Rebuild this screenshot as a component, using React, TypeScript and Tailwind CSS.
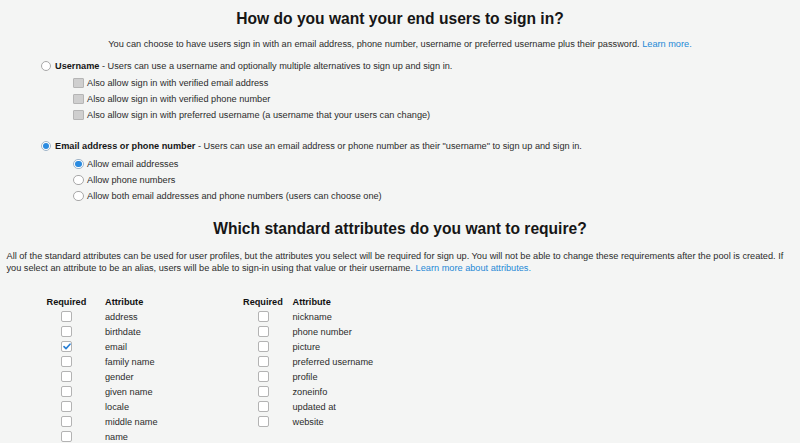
import React from "react";

const font = "font-['Liberation_Sans','Helvetica',Arial,sans-serif]";

function Radio({ checked }: { checked?: boolean }) {
  return (
    <span
      className={`flex h-[10.5px] w-[10.5px] shrink-0 items-center justify-center rounded-full border bg-white ${
        checked ? "border-[#9fb4c8]" : "border-[#a8a8a8]"
      }`}
    >
      {checked && <span className="h-[6.5px] w-[6.5px] rounded-full bg-[#2a8be0]" />}
    </span>
  );
}

function GrayBox() {
  return <span className="h-[10.5px] w-[10.5px] shrink-0 rounded-[1px] border border-[#b5b5b5] bg-[#cfcfcf]" />;
}

function CheckBox({ checked }: { checked?: boolean }) {
  return (
    <span className="flex h-[11px] w-[11px] shrink-0 items-center justify-center rounded-[2px] border border-[#b3b3b3] bg-white">
      {checked && (
        <svg width="8" height="7" viewBox="0 0 8 7" fill="none">
          <path d="M1 3.6 L3 5.6 L7 1.2" stroke="#2a7fd4" strokeWidth="1.6" strokeLinecap="round" strokeLinejoin="round" />
        </svg>
      )}
    </span>
  );
}

function AttrTable({
  cols,
  rows,
}: {
  cols: string;
  rows: { name: string; checked?: boolean }[];
}) {
  return (
    <div className={`grid ${cols} grid-rows-[13px] auto-rows-[15px] items-center`}>
      <div className="font-bold leading-[13px] text-[#111]">Required</div>
      <div className="font-bold leading-[13px] text-[#111]">Attribute</div>
      {rows.map((r) => (
        <React.Fragment key={r.name}>
          <div className="flex w-[40px] justify-center">
            <CheckBox checked={r.checked} />
          </div>
          <div>{r.name}</div>
        </React.Fragment>
      ))}
    </div>
  );
}

export default function App() {
  const left = [
    { name: "address" },
    { name: "birthdate" },
    { name: "email", checked: true },
    { name: "family name" },
    { name: "gender" },
    { name: "given name" },
    { name: "locale" },
    { name: "middle name" },
    { name: "name" },
  ];
  const right = [
    { name: "nickname" },
    { name: "phone number" },
    { name: "picture" },
    { name: "preferred username" },
    { name: "profile" },
    { name: "zoneinfo" },
    { name: "updated at" },
    { name: "website" },
  ];

  return (
    <div className={`h-[443px] w-[800px] overflow-hidden bg-[#f4f5f4] ${font} text-[9.2px] leading-[12px] text-[#2b2b2b]`}>
      <h1 className="pt-[10px] text-center text-[15.6px] font-bold leading-[18px] text-[#161616]">
        How do you want your end users to sign in?
      </h1>
      <p className="mt-[10px] text-center">
        You can choose to have users sign in with an email address, phone number, username or preferred username plus
        their password. <span className="text-[#2489d6]">Learn more.</span>
      </p>

      <div className="mt-[10px] flex items-center gap-[4px] pl-[40.5px]">
        <Radio />
        <span>
          <span className="font-bold text-[#161616]">Username</span> - Users can use a username and optionally multiple
          alternatives to sign up and sign in.
        </span>
      </div>
      <div className="mt-[3px] flex flex-col pl-[73px]">
        {[
          "Also allow sign in with verified email address",
          "Also allow sign in with verified phone number",
          "Also allow sign in with preferred username (a username that your users can change)",
        ].map((t) => (
          <div key={t} className="flex h-[16px] items-center gap-[3.5px]">
            <GrayBox />
            <span>{t}</span>
          </div>
        ))}
      </div>

      <div className="mt-[17px] flex items-center gap-[4px] pl-[40.5px]">
        <Radio checked />
        <span>
          <span className="font-bold text-[#161616]">Email address or phone number</span> - Users can use an email
          address or phone number as their "username" to sign up and sign in.
        </span>
      </div>
      <div className="mt-[4px] flex flex-col pl-[73px]">
        {[
          { t: "Allow email addresses", c: true },
          { t: "Allow phone numbers" },
          { t: "Allow both email addresses and phone numbers (users can choose one)" },
        ].map((r) => (
          <div key={r.t} className="flex h-[16px] items-center gap-[3.5px]">
            <Radio checked={r.c} />
            <span>{r.t}</span>
          </div>
        ))}
      </div>

      <h2 className="mt-[16px] text-center text-[15.6px] font-bold leading-[18px] text-[#161616]">
        Which standard attributes do you want to require?
      </h2>
      <div className="mt-[12px] flex flex-col px-[6.5px]">
        <span className="whitespace-nowrap">
          All of the standard attributes can be used for user profiles, but the attributes you select will be required
          for sign up. You will not be able to change these requirements after the pool is created. If
        </span>
        <span className="whitespace-nowrap">
          you select an attribute to be an alias, users will be able to sign-in using that value or their username.{" "}
          <span className="text-[#2489d6]">Learn more about attributes.</span>
        </span>
      </div>

      <div className="mt-[22px] flex pl-[46.5px]">
        <AttrTable cols="grid-cols-[58.5px_138px]" rows={left} />
        <AttrTable cols="grid-cols-[49.5px_160px]" rows={right} />
      </div>
    </div>
  );
}
